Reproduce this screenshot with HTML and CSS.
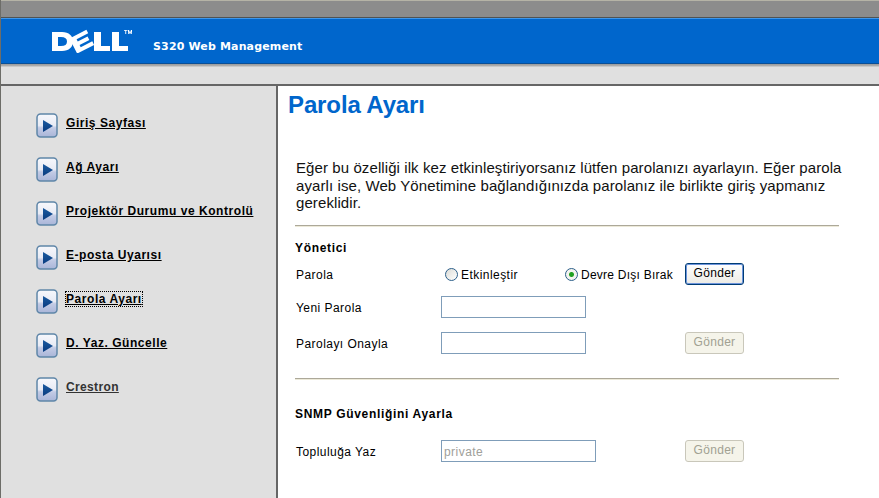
FILE: index.html
```html
<!DOCTYPE html>
<html lang="tr">
<head>
  <meta charset="UTF-8">
  <title>S320 Web Management</title>
  <link rel="stylesheet" href="styles.css">
</head>
<body>

  <div class="top-strip"></div>

  <header class="banner">
    <svg class="logo" width="82" height="24" viewBox="0 0 82 24" aria-label="Dell">
      <path fill="#fff" fill-rule="evenodd" d="M0 3H10C17 3 21 7 21 12.500C21 18 17 22 10 22H0ZM6 8V17H9C13 17 15 15.500 15 12.500C15 9.500 13 8 9 8Z"/>
      <path fill="#fff" transform="rotate(-27 30 12)" d="M20 4H39V8H26V10.500H37V14.500H26V17H39V21H20Z"/>
      <path fill="#fff" d="M42 3H49V17H58V22H42ZM60 3H67V17H76V22H60Z"/>
      <path fill="#fff" d="M72 1H75.500V1.800H74.200V5H73.300V1.800H72ZM76 1H77L78 3.500L79 1H80V5H79.200V2.800L78.300 5H77.700L76.800 2.800V5H76Z"/>
    </svg>
    <span class="banner-title">S320 Web Management</span>
  </header>

  <div class="sub-strip"></div>

  <div class="layout">
    <nav class="sidebar">
      <a class="nav-item" href="#"><svg class="nav-icon" viewBox="0 0 22 25"><use href="#arrow"/></svg><span>Giriş Sayfası</span></a>
      <a class="nav-item" href="#"><svg class="nav-icon" viewBox="0 0 22 25"><use href="#arrow"/></svg><span>Ağ Ayarı</span></a>
      <a class="nav-item" href="#"><svg class="nav-icon" viewBox="0 0 22 25"><use href="#arrow"/></svg><span>Projektör Durumu ve Kontrolü</span></a>
      <a class="nav-item" href="#"><svg class="nav-icon" viewBox="0 0 22 25"><use href="#arrow"/></svg><span>E-posta Uyarısı</span></a>
      <a class="nav-item current" href="#"><svg class="nav-icon" viewBox="0 0 22 25"><use href="#arrow"/></svg><span>Parola Ayarı</span></a>
      <a class="nav-item" href="#"><svg class="nav-icon" viewBox="0 0 22 25"><use href="#arrow"/></svg><span>D. Yaz. Güncelle</span></a>
      <a class="nav-item visited" href="#"><svg class="nav-icon" viewBox="0 0 22 25"><use href="#arrow"/></svg><span>Crestron</span></a>
    </nav>

    <main class="content">
      <h1 class="page-title">Parola Ayarı</h1>
      <p class="intro">Eğer bu özelliği ilk kez etkinleştiriyorsanız lütfen parolanızı ayarlayın. Eğer parola ayarlı ise, Web Yönetimine bağlandığınızda parolanız ile birlikte giriş yapmanız gereklidir.</p>
      <hr class="rule">

      <h2 class="section-title">Yönetici</h2>
      <div class="form-row row-password">
        <span class="field-label">Parola</span>
        <span class="radio-group">
          <span class="radio-option option-on"><span class="radio"></span>Etkinleştir</span>
          <span class="radio-option option-off"><span class="radio checked"></span>Devre Dışı Bırak</span>
        </span>
        <span class="btn active">Gönder</span>
      </div>
      <div class="form-row row-new">
        <span class="field-label">Yeni Parola</span>
        <span class="input"></span>
      </div>
      <div class="form-row row-confirm">
        <span class="field-label">Parolayı Onayla</span>
        <span class="input"></span>
        <span class="btn disabled">Gönder</span>
      </div>
      <hr class="rule rule-second">

      <h2 class="section-title snmp-title">SNMP Güvenliğini Ayarla</h2>
      <div class="form-row row-snmp">
        <span class="field-label">Topluluğa Yaz</span>
        <span class="input wide">private</span>
        <span class="btn disabled">Gönder</span>
      </div>
    </main>
  </div>

  <svg width="0" height="0" class="defs">
    <defs>
      <linearGradient id="tile" x1="0" y1="0" x2="0" y2="1">
        <stop offset="0" stop-color="#f7f8fc"/>
        <stop offset="0.5" stop-color="#e8ebf5"/>
        <stop offset="0.6" stop-color="#c3cbe5"/>
        <stop offset="1" stop-color="#a9b5d8"/>
      </linearGradient>
      <linearGradient id="tip" x1="0" y1="0" x2="0" y2="1">
        <stop offset="0" stop-color="#1a5aa0"/>
        <stop offset="1" stop-color="#0a3c80"/>
      </linearGradient>
      <g id="arrow">
        <rect x="1" y="1" width="20" height="23" rx="3.500" fill="url(#tile)" stroke="#5f86a8" stroke-width="1.500"/>
        <path d="M7 7L17 13L7 19Z" fill="url(#tip)"/>
      </g>
    </defs>
  </svg>

</body>
</html>
```

FILE: styles.css
```css
* {
  box-sizing: border-box;
}

body {
  margin: 0;
  height: 498px;
  overflow: hidden;
  background-color: #fff;
  border-left: 1px solid #6d6d68;
  font-family: "Liberation Sans", Arial, sans-serif;
  font-size: 12px;
  letter-spacing: 0.45px;
  color: #000;
}

/* Bandas superiores */
.top-strip {
  height: 18px;
  background-color: #8c8c8c;
  border-top: 1px solid #b5b3a6;
  border-bottom: 1px solid #4f5355;
}

.banner {
  display: flex;
  align-items: center;
  height: 46px;
  padding-left: 51px;
  background-color: #0066cc;
  border-top: 1px solid #3f96ea;
  border-bottom: 1px solid #0a4f96;
}

.logo {
  flex: none;
}

.banner-title {
  margin-left: 19px;
  margin-top: 11px;
  font-family: "DejaVu Sans", sans-serif;
  font-size: 11px;
  font-weight: bold;
  color: #fff;
  letter-spacing: 0.15px;
}

.sub-strip {
  height: 22px;
  background: linear-gradient(#9a9a9a 0, #b0b0b0 2px, #e0e0e0 3px);
  border-bottom: 2px solid #666;
}

/* Cuerpo */
.layout {
  display: flex;
  height: 412px;
}

.sidebar {
  flex: none;
  width: 277px;
  padding: 27px 0 0 35px;
  background-color: #e0e0e0;
  border-right: 2px solid #666;
}

.nav-item {
  display: flex;
  align-items: flex-start;
  height: 44px;
  color: #000;
  font-size: 12px;
  font-weight: bold;
  letter-spacing: 0.55px;
  text-decoration: underline;
}

.nav-item.visited {
  color: #333;
  letter-spacing: 0.35px;
}

.nav-icon {
  flex: none;
  width: 22px;
  height: 25px;
  margin-right: 8px;
}

.nav-item span {
  margin-top: 3px;
}

.nav-item.current span {
  outline: 1px dotted #000;
  outline-offset: 0;
}

.content {
  flex: 1;
  padding: 6px 40px 0 10px;
}

.page-title {
  margin: 0;
  font-size: 24px;
  line-height: 26px;
  font-weight: bold;
  letter-spacing: -0.12px;
  color: #0066cc;
}

.intro {
  margin: 41px -6px 0 8px;
  font-size: 15px;
  line-height: 17.5px;
  letter-spacing: 0.09px;
  color: #111;
}

.rule {
  height: 2px;
  margin: 13px 0 0 7px;
  border: 0;
  background: linear-gradient(#aca899 1px, #ece9d8 1px);
}

.rule-second {
  margin-top: 24px;
}

.section-title {
  margin: 14px 0 0 7px;
  font-size: 12px;
  line-height: 14px;
  font-weight: bold;
  letter-spacing: 0.68px;
}

.snmp-title {
  margin-top: 27px;
}

/* Formulario */
.form-row {
  display: flex;
  align-items: center;
  height: 22px;
  margin-left: 8px;
}

.row-password {
  margin-top: 8px;
}

.row-new {
  margin-top: 11px;
}

.row-confirm {
  margin-top: 14px;
}

.row-snmp {
  margin-top: 19px;
}

.field-label {
  flex: none;
  width: 145px;
  padding-top: 2px;
}

.radio-group {
  display: flex;
  width: 244px;
  padding: 2px 0 0 4px;
}

.radio-option {
  display: flex;
  align-items: center;
}

.option-on {
  width: 120px;
}

.option-off {
  letter-spacing: 0.25px;
}

.radio {
  width: 13px;
  height: 13px;
  margin-right: 3px;
  border: 1px solid #2c5f8a;
  border-radius: 50%;
  background: linear-gradient(135deg, #dcdcd7, #fff);
}

.radio.checked {
  background: radial-gradient(circle, #21a121 0, #21a121 2px, #f4f4f0 3px);
}

.input {
  width: 145px;
  height: 22px;
  padding-left: 2px;
  border: 1px solid #7f9db9;
  background-color: #fff;
  line-height: 22px;
  color: #a0a09a;
}

.input.wide {
  width: 155px;
}

.btn {
  display: flex;
  justify-content: center;
  align-items: center;
  width: 59px;
  height: 22px;
  padding-bottom: 2px;
  border-radius: 3px;
  letter-spacing: 0.3px;
}

.row-confirm .btn {
  margin-left: 99px;
}

.row-snmp .btn {
  margin-left: 89px;
}

.btn.active {
  border: 1px solid #003c74;
  background: linear-gradient(#fff, #ecebe5);
  box-shadow: inset 0 0 0 1px #6d94dc;
}

.btn.disabled {
  border: 1px solid #c9c7ba;
  background-color: #f5f4ea;
  color: #a1a192;
}

.defs {
  position: absolute;
}
```
